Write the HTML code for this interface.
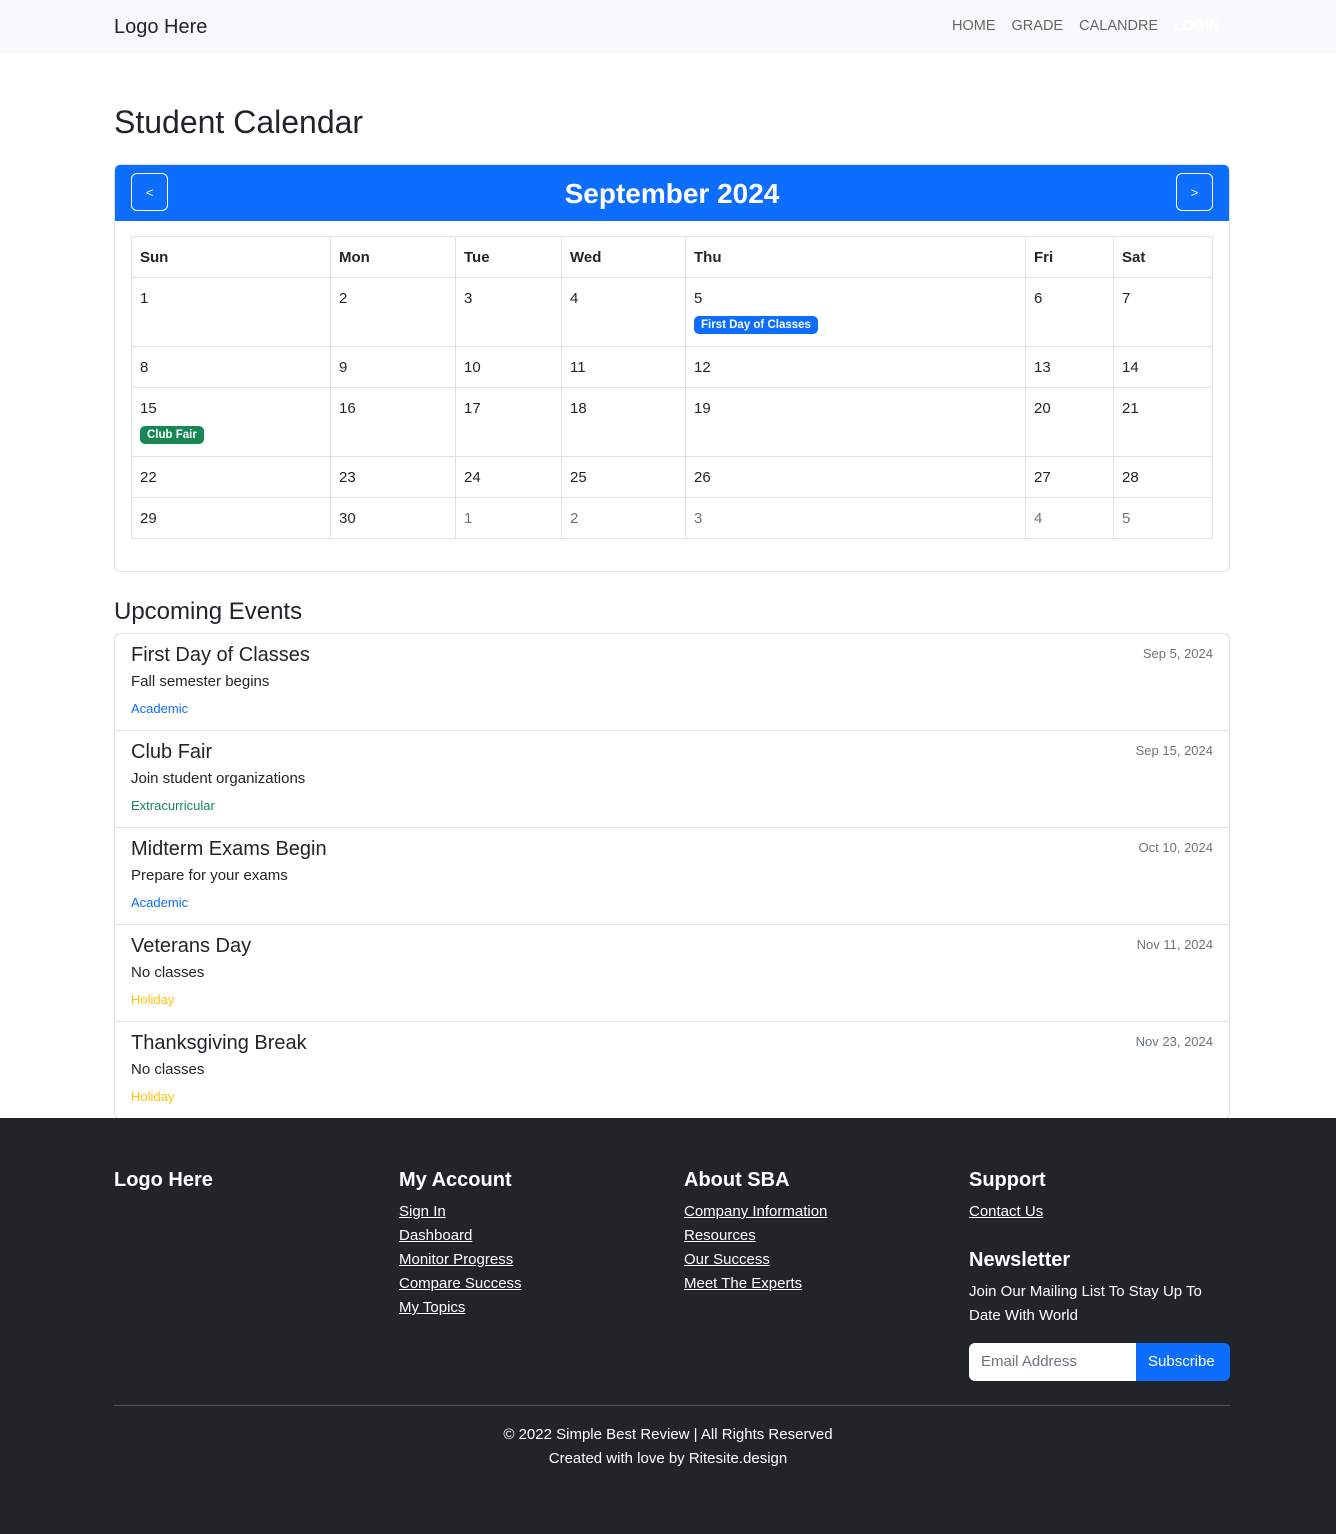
<!DOCTYPE html>
<html><head><meta charset="utf-8"><style>
*{box-sizing:border-box;margin:0;padding:0}
body{width:1336px;height:1534px;font-family:"Liberation Sans",sans-serif;color:#212529;background:#fff;font-size:15px;position:relative;overflow:hidden}
.nav{height:54px;background:#f8f9fa;position:relative}
.nav .logo{position:absolute;left:114px;top:16px;font-size:20px;color:#212529}
.nav .links{position:absolute;left:952px;top:18px;font-size:14.5px;color:rgba(0,0,0,.6)}
.nav .links span{margin-right:12px}
h1{position:absolute;left:114px;top:104px;font-size:32px;font-weight:500}
.card{position:absolute;left:114px;top:164px;width:1116px;height:408px;border:1px solid #dee2e6;border-radius:6px;overflow:hidden}
.ch{height:56px;background:#0d6efd;color:#fff;position:relative;text-align:center;font-size:28px;font-weight:bold;line-height:58px}
.btn{position:absolute;top:8px;width:37px;height:38px;border:1px solid #fff;border-radius:6px;font-size:13px;line-height:38px;font-weight:normal}
table{position:absolute;left:16px;top:71px;border-collapse:collapse;width:1081px;table-layout:fixed}
td,th{border:1px solid #dee2e6;text-align:left;vertical-align:top;padding:12px 8px 8px;font-size:15px}
th{height:41px;font-weight:bold}
tr.t td{height:69px}tr.s td{height:41px}
.o{color:#6c757d}
.b{display:inline-block;color:#fff;font-size:11.5px;font-weight:bold;padding:3px 7px;border-radius:5px;margin-top:9px}
h2{position:absolute;left:114px;top:598px;font-size:24px;font-weight:500}
.list{position:absolute;left:114px;top:633px;width:1116px;border:1px solid #dee2e6;border-radius:6px}
.it{height:97px;border-top:1px solid #dee2e6;position:relative;padding:10px 16px}
.it:first-child{border-top:none;height:96px}
.it h5{font-size:20px;font-weight:500;margin-top:0}
.it p{margin-top:6px;font-size:15px}
.it .c{margin-top:11px;font-size:13px}
.it .d{position:absolute;right:16px;top:12px;font-size:13px;color:#6c757d}
footer{position:absolute;left:0;top:1118px;width:1336px;height:416px;background:#212529;color:#fff}
footer h4{position:absolute;font-size:20px;font-weight:bold}
footer .col{position:absolute;top:82px;font-size:15px;line-height:24px}
footer a{color:#fff;text-decoration:underline;display:block}
.em{position:absolute;left:969px;top:225px;width:261px;height:38px;border-radius:6px;overflow:hidden;display:flex}
.em div{background:#fff;color:#6c757d;width:167px;padding:10px 12px;font-size:15px}
.em span{background:#0d6efd;flex:1;padding:10px 12px;font-size:15px}
hr{position:absolute;left:114px;top:287px;width:1116px;border:none;border-top:1px solid #555}
.copy{position:absolute;top:305px;width:100%;text-align:center;line-height:24px;font-size:15px}
</style></head><body>
<div class="nav"><div class="logo">Logo Here</div><div class="links"><span>HOME</span> <span>GRADE</span> <span>CALANDRE</span> <span style="color:#fff">LOGIN</span></div></div>
<h1>Student Calendar</h1>
<div class="card">
<div class="ch"><div class="btn" style="left:16px">&lt;</div>September 2024<div class="btn" style="right:16px">&gt;</div></div>
<table>
<colgroup><col style="width:199px"><col style="width:125px"><col style="width:106px"><col style="width:124px"><col style="width:340px"><col style="width:88px"><col style="width:99px"></colgroup>
<tr><th>Sun</th><th>Mon</th><th>Tue</th><th>Wed</th><th>Thu</th><th>Fri</th><th>Sat</th></tr>
<tr class="t"><td>1</td><td>2</td><td>3</td><td>4</td><td>5<br><span class="b" style="background:#0d6efd">First Day of Classes</span></td><td>6</td><td>7</td></tr>
<tr class="s"><td>8</td><td>9</td><td>10</td><td>11</td><td>12</td><td>13</td><td>14</td></tr>
<tr class="t"><td>15<br><span class="b" style="background:#198754">Club Fair</span></td><td>16</td><td>17</td><td>18</td><td>19</td><td>20</td><td>21</td></tr>
<tr class="s"><td>22</td><td>23</td><td>24</td><td>25</td><td>26</td><td>27</td><td>28</td></tr>
<tr class="s"><td>29</td><td>30</td><td class="o">1</td><td class="o">2</td><td class="o">3</td><td class="o">4</td><td class="o">5</td></tr>
</table>
</div>
<h2>Upcoming Events</h2>
<div class="list">
<div class="it"><h5>First Day of Classes</h5><p>Fall semester begins</p><div class="c" style="color:#0d6efd">Academic</div><div class="d">Sep 5, 2024</div></div>
<div class="it"><h5>Club Fair</h5><p>Join student organizations</p><div class="c" style="color:#198754">Extracurricular</div><div class="d">Sep 15, 2024</div></div>
<div class="it"><h5>Midterm Exams Begin</h5><p>Prepare for your exams</p><div class="c" style="color:#0d6efd">Academic</div><div class="d">Oct 10, 2024</div></div>
<div class="it"><h5>Veterans Day</h5><p>No classes</p><div class="c" style="color:#ffc107">Holiday</div><div class="d">Nov 11, 2024</div></div>
<div class="it"><h5>Thanksgiving Break</h5><p>No classes</p><div class="c" style="color:#ffc107">Holiday</div><div class="d">Nov 23, 2024</div></div>
</div>
<footer>
<h4 style="left:114px;top:51px">Logo Here</h4>
<h4 style="left:399px;top:51px">My Account</h4>
<h4 style="left:684px;top:51px">About SBA</h4>
<h4 style="left:969px;top:51px">Support</h4>
<div class="col" style="left:399px"><a>Sign In</a><a>Dashboard</a><a>Monitor Progress</a><a>Compare Success</a><a>My Topics</a></div>
<div class="col" style="left:684px"><a>Company Information</a><a>Resources</a><a>Our Success</a><a>Meet The Experts</a></div>
<div class="col" style="left:969px"><a>Contact Us</a></div>
<h4 style="left:969px;top:131px">Newsletter</h4>
<div class="col" style="left:969px;top:162px;width:260px">Join Our Mailing List To Stay Up To Date With World</div>
<div class="em"><div>Email Address</div><span>Subscribe</span></div>
<hr>
<div class="copy">© 2022 Simple Best Review | All Rights Reserved<br>Created with love by Ritesite.design</div>
</footer>
</body></html>
